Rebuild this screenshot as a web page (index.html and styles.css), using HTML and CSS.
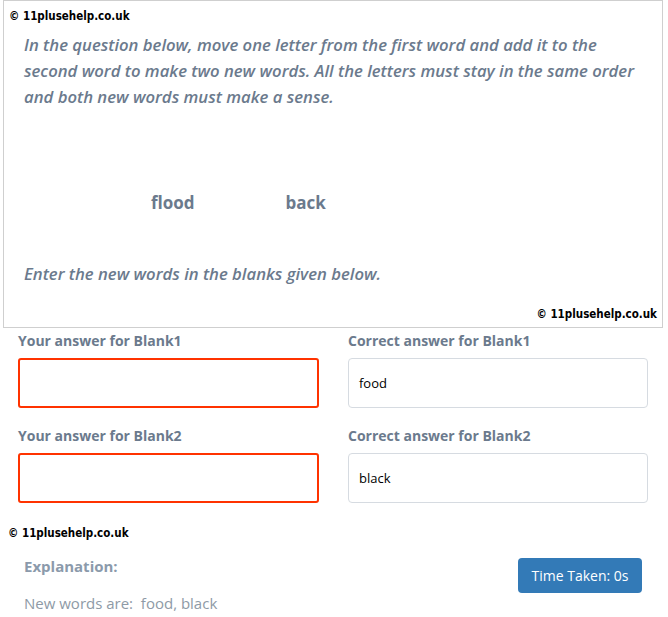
FILE: index.html
```html
<!DOCTYPE html>
<html>
<head>
<meta charset="utf-8">
<link rel="stylesheet" href="styles.css">
</head>
<body>
<div class="question">
  <div class="copy">© 11plusehelp.co.uk</div>
  <p class="prompt">In the question below, move one letter from the first word and add it to the second word to make two new words. All the letters must stay in the same order and both new words must make a sense.</p>
  <div class="words"><span class="w1">flood</span><span class="w2">back</span></div>
  <p class="prompt enter">Enter the new words in the blanks given below.</p>
  <div class="copy copy-right">© 11plusehelp.co.uk</div>
</div>
<div class="answers">
  <div class="field">
    <div class="label">Your answer for Blank1</div>
    <div class="input wrong"></div>
  </div>
  <div class="field">
    <div class="label">Correct answer for Blank1</div>
    <div class="input correct">food</div>
  </div>
  <div class="field">
    <div class="label">Your answer for Blank2</div>
    <div class="input wrong"></div>
  </div>
  <div class="field">
    <div class="label">Correct answer for Blank2</div>
    <div class="input correct">black</div>
  </div>
</div>
<div class="copy copy-bottom">© 11plusehelp.co.uk</div>
<div class="explain-row">
  <div class="explain-title">Explanation:</div>
  <div class="timer">Time Taken: 0s</div>
</div>
<div class="explain-text">New words are:&nbsp; food, black</div>
</body>
</html>
```

FILE: styles.css
```css
* { box-sizing: border-box; }
body {
  margin: 0;
  width: 668px;
  font-family: "Open Sans", sans-serif;
  background: #fff;
}
.question {
  margin: 0 5px 0 3px;
  height: 328px;
  border: 1px solid #cfcfcf;
  padding: 8px 5px 0 5px;
  display: flex;
  flex-direction: column;
}
.copy {
  font-family: "DejaVu Sans Condensed", "DejaVu Sans", sans-serif;
  font-weight: bold;
  font-size: 11.5px;
  line-height: 14px;
  color: #000;
}
.prompt {
  margin: 0;
  padding-left: 15px;
  max-width: 640px;
  font-style: italic;
  font-weight: 600;
  font-size: 16.7px;
  line-height: 26px;
  color: #6b7a8d;
}
.question > .prompt:first-of-type { margin-top: 9px; }
.words {
  margin-top: 80px;
  height: 26px;
  line-height: 26px;
  font-weight: 700;
  font-size: 17px;
  color: #6b7a8d;
  display: flex;
}
.w1 { margin-left: 142px; }
.w2 { margin-left: 91px; }
.enter { margin-top: 45px; }
.copy-right {
  margin-top: 20px;
  align-self: flex-end;
}
.answers {
  display: grid;
  grid-template-columns: 301px 300px;
  column-gap: 29px;
  row-gap: 18px;
  padding: 3px 0 0 18px;
}
.label {
  font-weight: 700;
  font-size: 14px;
  line-height: 20px;
  color: #6b7a8d;
  margin-bottom: 7px;
}
.input {
  height: 50px;
  border-radius: 4px;
  font-size: 13px;
  line-height: 48px;
  padding-left: 10px;
  color: #000;
}
.input.wrong {
  border: 2px solid #ff3300;
  border-radius: 3px;
}
.input.correct {
  border: 1px solid #d6dbe1;
}
.copy-bottom {
  margin: 23px 0 0 8px;
}
.explain-row {
  display: flex;
  justify-content: space-between;
  align-items: flex-start;
  padding: 18px 26px 0 24px;
}
.explain-title {
  font-weight: 700;
  font-size: 15px;
  line-height: 16px;
  color: #8b9aab;
}
.timer {
  background: #337ab7;
  color: #fff;
  font-size: 14px;
  line-height: 35px;
  height: 35px;
  width: 124px;
  text-align: center;
  border-radius: 4px;
}
.explain-text {
  padding-left: 24px;
  font-size: 15px;
  line-height: 20px;
  color: #8e9aa6;
}
```
